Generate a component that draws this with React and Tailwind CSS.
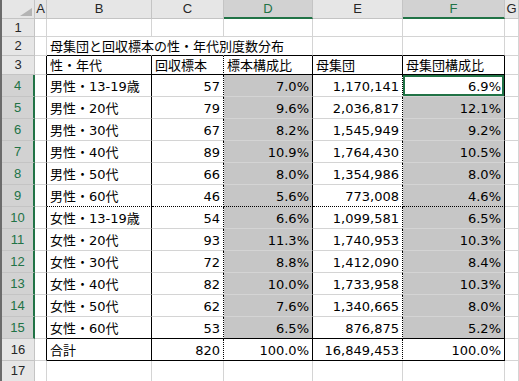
const ROWS = [
  ['男性・13-19歳', '57', '7.0%', '1,170,141', '6.9%'],
  ['男性・20代', '79', '9.6%', '2,036,817', '12.1%'],
  ['男性・30代', '67', '8.2%', '1,545,949', '9.2%'],
  ['男性・40代', '89', '10.9%', '1,764,430', '10.5%'],
  ['男性・50代', '66', '8.0%', '1,354,986', '8.0%'],
  ['男性・60代', '46', '5.6%', '773,008', '4.6%'],
  ['女性・13-19歳', '54', '6.6%', '1,099,581', '6.5%'],
  ['女性・20代', '93', '11.3%', '1,740,953', '10.3%'],
  ['女性・30代', '72', '8.8%', '1,412,090', '8.4%'],
  ['女性・40代', '82', '10.0%', '1,733,958', '10.3%'],
  ['女性・50代', '62', '7.6%', '1,340,665', '8.0%'],
  ['女性・60代', '53', '6.5%', '876,875', '5.2%'],
]

const COLS = ['A', 'B', 'C', 'D', 'E', 'F', 'G']

const RIGHT = {
  g: '[border-right:1px_solid_#d4d4d4]',
  k: '[border-right:1px_solid_#000]',
  d: '[border-right:1px_dotted_#000]',
  n: '[border-right:1px_solid_transparent]',
}
const BOTTOM = {
  g: '[border-bottom:1px_solid_#d4d4d4]',
  k: '[border-bottom:1px_solid_#000]',
  d: '[border-bottom:1px_dotted_#000]',
}

function rightOf(r, c) {
  if (r >= 3 && r <= 16) {
    if (c === 'A' || c === 'B' || c === 'D' || c === 'F') return 'k'
    if (c === 'C') return 'd'
    if (c === 'E') return r === 3 ? 'k' : 'd'
  }
  if (r === 2 && (c === 'B' || c === 'C')) return 'n'
  return 'g'
}

function bottomOf(r, c) {
  if ('BCDEF'.includes(c)) {
    if (r === 2 || r === 3 || r === 15 || r === 16) return 'k'
    if (r === 9) return 'd'
  }
  return 'g'
}

// cell text by row number
function contentOf(r) {
  if (r === 2) return { B: '母集団と回収標本の性・年代別度数分布' }
  if (r === 3) return { B: '性・年代', C: '回収標本', D: '標本構成比', E: '母集団', F: '母集団構成比' }
  if (r >= 4 && r <= 15) {
    const [b, c, d, e, f] = ROWS[r - 4]
    return { B: b, C: c, D: d, E: e, F: f }
  }
  if (r === 16) return { B: '合計', C: '820', D: '100.0%', E: '16,849,453', F: '100.0%' }
  return {}
}

function HeaderCell({ label, selected }) {
  return (
    <div
      className={`flex items-center justify-center border-r border-[#c4c4c4] font-['Liberation_Sans',sans-serif] text-[13px] ${
        selected
          ? 'bg-[#d2d2d2] text-[#217346] border-b-2 border-b-[#217346]'
          : 'bg-[#e6e6e6] text-[#262626] border-b border-b-[#c4c4c4]'
      }`}
    >
      {label}
    </div>
  )
}

function RowHeader({ n }) {
  const selected = n >= 4 && n <= 15
  return (
    <div
      className={`flex items-center justify-center border-b border-[#c4c4c4] font-['Liberation_Sans',sans-serif] text-[13px] ${
        selected
          ? 'bg-[#d2d2d2] text-[#217346] border-r-2 border-r-[#217346]'
          : 'bg-[#e6e6e6] text-[#262626] border-r border-r-[#c4c4c4]'
      }`}
    >
      {n}
    </div>
  )
}

export default function App() {
  const rowNums = Array.from({ length: 17 }, (_, i) => i + 1)

  return (
    <div className="flex h-[381px] w-[519px] overflow-hidden bg-white">
      <div className="w-[2px] shrink-0 bg-[#6b6b6b]" />
      <div className="grid flex-1 grid-cols-[33px_12px_105px_72px_89px_90px_102px_1fr] grid-rows-[19px_18px_19px_19px_repeat(12,22px)_22px_1fr]">
        {/* corner */}
        <div className="flex items-end justify-end border-r border-b border-[#c4c4c4] bg-[#e6e6e6] pr-[2px] pb-[2px]">
          <svg width="12" height="8" viewBox="0 0 12 8">
            <polygon points="12,0 12,8 0,8" fill="#b4b4b4" />
          </svg>
        </div>
        {COLS.map(c => (
          <HeaderCell key={c} label={c} selected={c === 'D' || c === 'F'} />
        ))}

        {rowNums.map(r => {
          const content = contentOf(r)
          return [
            <RowHeader key={`h${r}`} n={r} />,
            ...COLS.map(c => {
              const text = content[c]
              const sel = (c === 'D' || c === 'F') && r >= 4 && r <= 15
              const active = c === 'F' && r === 4
              const right = c !== 'B' && r >= 4
              const spill = r === 2 && c === 'B'
              return (
                <div
                  key={`${c}${r}`}
                  className={`flex items-center whitespace-nowrap font-['DejaVu_Sans','Noto_Sans_CJK_JP',sans-serif] text-[13px] leading-none text-black ${RIGHT[rightOf(r, c)]} ${BOTTOM[bottomOf(r, c)]} ${
                    sel && !active ? 'bg-[#c6c6c6]' : 'bg-white'
                  } ${active ? 'shadow-[inset_0_0_0_2px_#217346]' : ''} ${
                    right ? 'justify-end pr-[3px]' : 'justify-start pl-[3px]'
                  } ${spill ? 'relative z-10 overflow-visible' : 'overflow-hidden'}`}
                >
                  {text && <span className="pt-[1px]">{text}</span>}
                </div>
              )
            }),
          ]
        })}
      </div>
    </div>
  )
}
